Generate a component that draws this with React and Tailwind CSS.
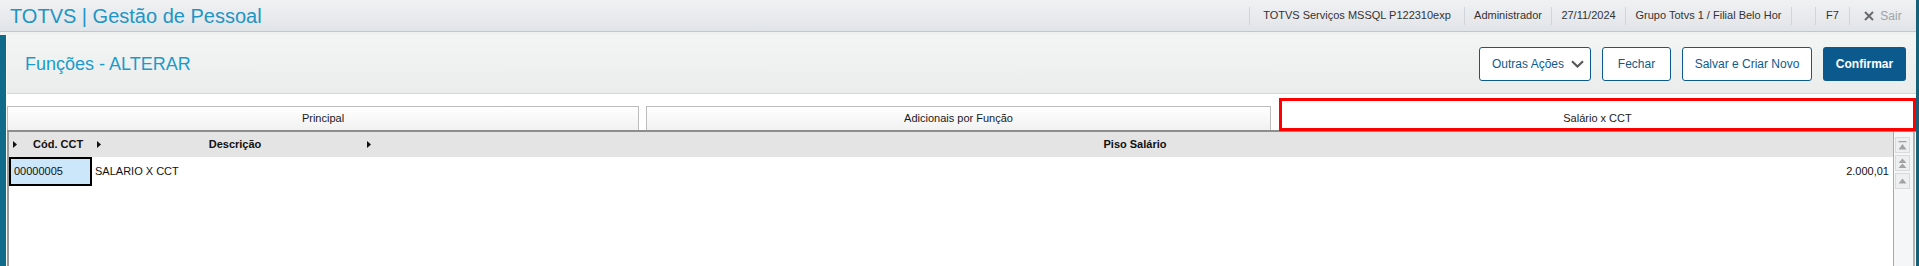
import React from "react";

const FONT = { fontFamily: '"Liberation Sans", Arial, sans-serif' };

function HeadArrow() {
  return (
    <svg width="4" height="7" viewBox="0 0 4 7" className="shrink-0">
      <path d="M0 0 L4 3.5 L0 7 Z" fill="#111" />
    </svg>
  );
}

function Cell({ className, children }) {
  return (
    <div className={"h-[18px] border-l border-[#d2d5da] flex items-center justify-center whitespace-nowrap " + className}>
      {children}
    </div>
  );
}

function ScrollBtn({ kind }) {
  return (
    <div className="w-[15px] h-[16px] bg-[#eeeff0] border border-[#d9dadc] flex items-center justify-center">
      {kind === "first" && (
        <svg width="9" height="9" viewBox="0 0 9 9">
          <rect x="0.5" y="0" width="8" height="1.3" fill="#a3a3a3" />
          <path d="M4.5 3 L8.5 8.5 L0.5 8.5 Z" fill="#a3a3a3" />
        </svg>
      )}
      {kind === "page" && (
        <svg width="9" height="11" viewBox="0 0 9 11">
          <path d="M4.5 0.5 L8.5 5 L0.5 5 Z" fill="#a3a3a3" />
          <path d="M4.5 5.5 L8.5 10 L0.5 10 Z" fill="#a3a3a3" />
        </svg>
      )}
      {kind === "up" && (
        <svg width="9" height="6" viewBox="0 0 9 6">
          <path d="M4.5 0.5 L8.5 5.5 L0.5 5.5 Z" fill="#a3a3a3" />
        </svg>
      )}
    </div>
  );
}

export default function App() {
  return (
    <div style={FONT} className="w-[1919px] h-[266px] overflow-hidden bg-white flex">
      <div className="flex-1 flex flex-col min-w-0">
        {/* Top header */}
        <div className="h-[32px] shrink-0 flex items-center bg-gradient-to-b from-[#f1f1f3] to-[#e1e4e8] border-b border-[#c3c7cc]">
          <div className="flex-1 pl-[10px] text-[20px] leading-none text-[#1d95c5] whitespace-nowrap">
            TOTVS | Gestão de Pessoal
          </div>
          <div className="flex items-center text-[11px] text-[#333]">
            <Cell className="w-[215px]">TOTVS Serviços MSSQL P122310exp</Cell>
            <Cell className="w-[87px]">Administrador</Cell>
            <Cell className="w-[74px]">27/11/2024</Cell>
            <Cell className="w-[166px]">Grupo Totvs 1 / Filial Belo Hor</Cell>
            <Cell className="w-[24px]"></Cell>
            <Cell className="w-[34px]">F7</Cell>
            <Cell className="w-[67px] gap-[6px]">
              <svg width="10" height="10" viewBox="0 0 10 10">
                <path d="M1 1 L9 9 M9 1 L1 9" stroke="#666" strokeWidth="1.8" />
              </svg>
              <span className="text-[#a0a4a8] text-[12px]">Sair</span>
            </Cell>
          </div>
        </div>
        <div className="h-[3px] shrink-0 bg-[#eff1f1]" />

        {/* Body */}
        <div className="flex-1 flex min-h-0">
          <div className="w-[6px] shrink-0 bg-[#106b8a]" />
          <div className="flex-1 flex flex-col min-w-0 pl-[1px]">
            {/* Title panel */}
            <div className="h-[59px] shrink-0 flex items-center justify-between pl-[18px] pr-[10px] bg-gradient-to-b from-[#f3f5f4] to-[#ebedec] border-b border-[#d5d6d6]">
              <div className="text-[18px] text-[#1b9bcb] whitespace-nowrap">Funções - ALTERAR</div>
              <div className="flex items-center gap-[11px] text-[12px]">
                <button className="w-[112px] h-[34px] flex items-center justify-between pl-[12px] pr-[6px] bg-white border border-[#0d5b8d] rounded-[3px] text-[#0d5b8d]">
                  <span>Outras Ações</span>
                  <svg width="13" height="8" viewBox="0 0 13 8">
                    <path d="M1 1.2 L6.5 6.5 L12 1.2" stroke="#555" strokeWidth="2" fill="none" />
                  </svg>
                </button>
                <button className="w-[69px] h-[34px] flex items-center justify-center bg-white border border-[#0d5b8d] rounded-[3px] text-[#0d5b8d]">
                  Fechar
                </button>
                <button className="w-[130px] h-[34px] flex items-center justify-center bg-white border border-[#0d5b8d] rounded-[3px] text-[#0d5b8d]">
                  Salvar e Criar Novo
                </button>
                <button className="w-[83px] h-[34px] flex items-center justify-center bg-[#0c5a8d] rounded-[3px] text-white font-bold">
                  Confirmar
                </button>
              </div>
            </div>

            {/* Tabs */}
            <div className="relative mt-[12px] h-[24px] shrink-0 flex text-[11px] text-[#1a1a1a]">
              <div className="w-[632px] shrink-0 flex items-center justify-center border border-b-0 border-[#bcbcbc] bg-gradient-to-b from-white to-[#f1f1f1]">
                Principal
              </div>
              <div className="ml-[7px] w-[625px] shrink-0 flex items-center justify-center border border-b-0 border-[#bcbcbc] bg-gradient-to-b from-white to-[#f1f1f1]">
                Adicionais por Função
              </div>
              <div className="ml-[8px] relative flex-1 flex items-center justify-center bg-white">
                Salário x CCT
                <div className="absolute -top-[8px] left-0 right-0 -bottom-[1px] border-[3px] border-[#ff0000]" />
              </div>
            </div>

            {/* Grid */}
            <div className="flex-1 flex min-h-0 border-t-2 border-[#8d8d8d]">
              <div className="flex-1 flex flex-col border-l-2 border-[#9b9b9b] min-w-0 text-[11px] text-[#111]">
                <div className="h-[25px] shrink-0 flex items-center bg-[#e4e4e4] font-bold">
                  <div className="w-[83px] shrink-0 flex items-center pl-[4px]">
                    <HeadArrow />
                    <span className="ml-[16px]">Cód. CCT</span>
                  </div>
                  <div className="w-[270px] shrink-0 flex items-center pl-[5px]">
                    <HeadArrow />
                    <span className="flex-1 text-center pl-[7px]">Descrição</span>
                  </div>
                  <div className="flex-1 flex items-center pl-[5px]">
                    <HeadArrow />
                    <span className="flex-1 text-center pl-[6px]">Piso Salário</span>
                  </div>
                </div>
                <div className="h-[29px] shrink-0 flex items-stretch">
                  <div className="w-[83px] shrink-0 flex items-center pl-[3px] bg-[#cde7fa] border-2 border-black">
                    00000005
                  </div>
                  <div className="w-[270px] shrink-0 flex items-center pl-[3px]">SALARIO X CCT</div>
                  <div className="flex-1 flex items-center justify-end pr-[4px]">2.000,01</div>
                </div>
              </div>
              <div className="w-[20px] shrink-0 border-l border-[#a9a9a9] bg-[#f5f6f7] flex flex-col pt-[5px] pl-[1px] gap-[2px]">
                <ScrollBtn kind="first" />
                <ScrollBtn kind="page" />
                <ScrollBtn kind="up" />
              </div>
              <div className="w-[3px] shrink-0 border-l-2 border-[#b3b3b3] bg-white" />
            </div>
          </div>
        </div>
      </div>
      <div className="w-[3px] shrink-0 bg-[#16607a]" />
    </div>
  );
}
